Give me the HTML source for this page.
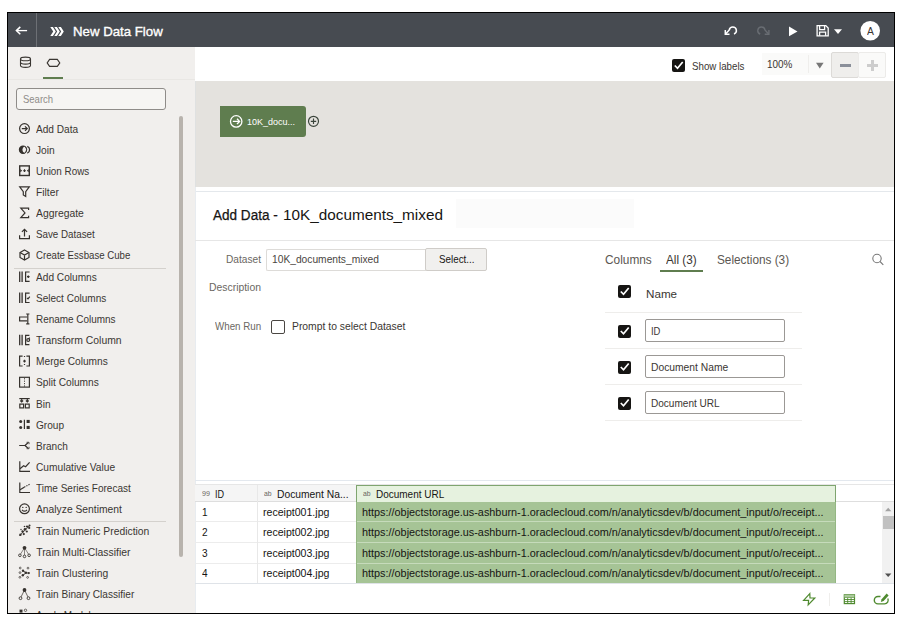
<!DOCTYPE html>
<html><head><meta charset="utf-8"><title>New Data Flow</title>
<style>
html,body{margin:0;padding:0;background:#fff;}
body{width:907px;height:619px;position:relative;overflow:hidden;font-family:"Liberation Sans",sans-serif;}
.a{position:absolute;box-sizing:border-box;}
.t{position:absolute;white-space:pre;line-height:1;transform-origin:0 0;}
svg{position:absolute;overflow:visible;}
.cb{position:absolute;box-sizing:border-box;width:13px;height:13px;background:#161513;border-radius:2px;}
.inp{position:absolute;box-sizing:border-box;border:1px solid #9b9895;border-radius:2px;background:#fff;}
</style></head><body>
<!-- frame -->
<div class="a" style="left:7px;top:12px;width:888px;height:602px;border:1px solid #000;background:#fff"></div>
<div class="a" id="clip" style="left:0;top:0;width:907px;height:619px;clip-path:inset(13px 13px 6px 8px)">
<!-- header -->
<div class="a" style="left:8px;top:13px;width:886px;height:34px;background:#474b51"></div>
<div class="a" style="left:36px;top:13px;width:1px;height:34px;background:#6d7075"></div>
<!-- sidebar -->
<div class="a" style="left:8px;top:47px;width:187px;height:566px;background:#f1efed"></div>
<div class="a" style="left:43px;top:77px;width:20px;height:2px;background:#5f7d4f"></div>
<div class="a" style="left:8px;top:79px;width:187px;height:1px;background:#e9e7e4"></div>
<div class="a" style="left:16px;top:88.3px;width:150px;height:22px;border:1px solid #8f8c89;border-radius:3px;background:#f6f5f3"></div>
<div class="a" style="left:179px;top:116px;width:4px;height:441px;background:#b8b3ad;border-radius:2px"></div>
<div class="a" style="left:14px;top:268px;width:152px;height:1px;background:#d4d1cd"></div>
<div class="a" style="left:14px;top:521px;width:152px;height:1px;background:#d4d1cd"></div>
<!-- main toolbar -->
<div class="cb" style="left:672px;top:59px"></div>
<div class="a" style="left:762px;top:53px;width:69px;height:22px;background:#fafaf9"></div>
<div class="a" style="left:808px;top:55px;width:1px;height:18px;background:#efeeec"></div>
<div class="a" style="left:831px;top:52px;width:28px;height:26px;background:#efeeec;border:1px solid #dcdad7;border-radius:2px"></div>
<div class="a" style="left:858px;top:52px;width:28px;height:26px;background:#fafaf9;border:1px solid #ecebe9;border-radius:2px"></div>
<div class="a" style="left:839.5px;top:63.5px;width:11.5px;height:3px;background:#8a8f99"></div>
<div class="a" style="left:867px;top:64px;width:11px;height:3px;background:#cdcdcd"></div>
<div class="a" style="left:871px;top:60px;width:3px;height:11px;background:#cdcdcd"></div>
<!-- canvas -->
<div class="a" style="left:195px;top:81px;width:699px;height:106.4px;background:#e4e2de"></div>
<div class="a" style="left:220px;top:106px;width:86px;height:31px;background:#5f7d4f;border-radius:0 3px 3px 0"></div>
<!-- panel -->
<div class="a" style="left:195px;top:191px;width:699px;height:1px;background:#e4e8ec"></div>
<div class="a" style="left:195px;top:81px;width:1px;height:106px;background:#dfe1e1"></div>
<div class="a" style="left:195px;top:187px;width:1px;height:426px;background:#e8ecf0"></div>
<div class="a" style="left:456px;top:199px;width:178px;height:29px;background:#fbfbfb"></div>
<div class="a" style="left:195px;top:240px;width:699px;height:1px;background:#e6e6e6"></div>
<div class="inp" style="left:266px;top:249px;width:160px;height:22px;border-color:#dddbd8;border-right:none;border-radius:2px 0 0 2px"></div>
<div class="a" style="left:425px;top:248px;width:62px;height:23px;background:#f1f0ee;border:1px solid #cfccc8;border-radius:2px"></div>
<div class="a" style="left:271px;top:320px;width:14px;height:14px;border:1.2px solid #4a4642;border-radius:2px;background:#fff"></div>
<!-- columns -->
<div class="a" style="left:660px;top:270px;width:43px;height:2px;background:#5f7d4f"></div>
<div class="cb" style="left:618px;top:285px"></div>
<div class="cb" style="left:618px;top:324.5px"></div>
<div class="cb" style="left:618px;top:360.5px"></div>
<div class="cb" style="left:618px;top:396.5px"></div>
<div class="a" style="left:605px;top:312px;width:197px;height:1px;background:#eeedeb"></div>
<div class="a" style="left:605px;top:348px;width:197px;height:1px;background:#eeedeb"></div>
<div class="a" style="left:605px;top:384px;width:197px;height:1px;background:#eeedeb"></div>
<div class="a" style="left:605px;top:420px;width:197px;height:1px;background:#eeedeb"></div>
<div class="inp" style="left:645px;top:319px;width:140px;height:23px"></div>
<div class="inp" style="left:645px;top:355px;width:140px;height:23px"></div>
<div class="inp" style="left:645px;top:391px;width:140px;height:23px"></div>
<!-- table -->
<div class="a" style="left:195px;top:480px;width:699px;height:1px;background:#e3e8ee"></div>
<div class="a" style="left:195px;top:484px;width:699px;height:18px;background:#fff;border-top:1px solid #e6e6e6;border-bottom:1px solid #dedede"></div>
<div class="a" style="left:195px;top:485px;width:161px;height:16px;background:#f5f5f5"></div>
<div class="a" style="left:356px;top:485px;width:480px;height:17px;background:#e6f2df;border:1px solid #7fa56f;border-bottom:none"></div>
<div class="a" style="left:356px;top:502px;width:480px;height:81px;background:#a6c496"></div>
<div class="a" style="left:195px;top:521px;width:161px;height:1px;background:#ececec"></div>
<div class="a" style="left:195px;top:542px;width:161px;height:1px;background:#ececec"></div>
<div class="a" style="left:195px;top:563px;width:161px;height:1px;background:#ececec"></div>
<div class="a" style="left:356px;top:521px;width:480px;height:1px;background:#c6dbbb"></div>
<div class="a" style="left:356px;top:542px;width:480px;height:1px;background:#c6dbbb"></div>
<div class="a" style="left:356px;top:563px;width:480px;height:1px;background:#c6dbbb"></div>
<div class="a" style="left:195px;top:583px;width:699px;height:1px;background:#dfe3e8"></div>
<div class="a" style="left:257px;top:485px;width:1px;height:98px;background:#e8e8e8"></div>
<div class="a" style="left:356px;top:502px;width:1px;height:81px;background:#94b783"></div>
<div class="a" style="left:835px;top:502px;width:1px;height:81px;background:#94b783"></div>
<div class="a" style="left:882px;top:502px;width:12px;height:81px;background:#f1f1f1"></div>
<div class="a" style="left:883px;top:516px;width:11px;height:13px;background:#c1c1c1"></div>
<div class="a" style="left:829px;top:593px;width:1px;height:13px;background:#efeeec"></div>
<svg width="907" height="619" viewBox="0 0 907 619" style="left:0;top:0" fill="none" stroke-linecap="butt" stroke-linejoin="miter">
<!-- header icons -->
<g stroke="#fff" stroke-width="1.3">
<path d="M16.2 30.6H27.1"/><path d="M20.3 26.9L16.4 30.6L20.3 34.3" stroke-width="1.5"/>
</g>
<g fill="#fff" stroke="none">
<path d="M50.3 27h2.6l2.9 4.5l-2.9 4.5h-2.6l2.9-4.5z"/>
<path d="M54.3 27h2.6l2.9 4.5l-2.9 4.5h-2.6l2.9-4.5z"/>
<path d="M58.3 27h2.6l2.9 4.500l-2.900 4.500h-2.600l2.900-4.500z"/>
</g>
<!-- undo -->
<g stroke="#fff" stroke-width="1.500">
<path d="M725.600 33.900L729.250 30A3.600 3.600 0 1 1 734 34"/>
<path d="M725.300 30V34.200H729.500"/>
</g>
<!-- redo (disabled) -->
<g stroke="#696d73" stroke-width="1.400">
<path d="M768.600 33.900L764.950 30A3.600 3.600 0 1 0 760.200 34"/>
<path d="M768.900 30V34.200H764.700"/>
</g>
<!-- play -->
<path d="M789 26.600L797.500 31.400L789 36.200z" fill="#fff"/>
<!-- save -->
<g stroke="#fff" stroke-width="1.3">
<path d="M817.100 25.600H825.800L828.200 28V35.800H817.100z"/>
<path d="M819.600 25.600V29.600H824.600V25.600"/>
<path d="M819.600 35.800V32.200H825.600V35.800"/>
</g>
<path d="M834 29.200H842L838 33.900z" fill="#fff"/>
<circle cx="870.200" cy="30.800" r="9.800" fill="#fff"/>
<!-- tab icons -->
<g stroke="#3a3632" stroke-width="1.100">
<ellipse cx="25.500" cy="58.900" rx="5" ry="1.800"/>
<path d="M20.500 58.900V65.600A5 1.800 0 0 0 30.500 65.600V58.900"/>
<path d="M20.500 62.300A5 1.800 0 0 0 30.500 62.300"/>
<path d="M47.200 62.900L49.600 59.400H57.300L59.800 62.900L57.300 66.400H49.600z"/>
</g>
<!-- toolbar: checkbox check, dropdown -->
<path d="M674.800 65.500L677.500 68.300L682.700 62" stroke="#fff" stroke-width="1.700"/>
<path d="M816 62.800H823.600L819.800 68.400z" fill="#777"/>
<!-- canvas node icons -->
<g stroke="#fff" stroke-width="1.300">
<circle cx="236.200" cy="121.400" r="5.700"/>
<path d="M232.800 121.400H239.400M237 118.800L239.600 121.400L237 124"/>
</g>
<g stroke="#3a443b" stroke-width="1.150">
<circle cx="313.500" cy="121.300" r="5"/>
<path d="M310.800 121.300H316.200M313.500 118.600V124"/>
</g>
<!-- columns: checkmarks, search -->
<g stroke="#fff" stroke-width="1.700">
<path d="M620.800 291.500L623.500 294.300L628.700 288"/>
<path d="M620.800 331L623.500 333.800L628.700 327.500"/>
<path d="M620.800 367L623.500 369.800L628.700 363.500"/>
<path d="M620.800 403L623.500 405.800L628.700 399.500"/>
</g>
<g stroke="#777" stroke-width="1.100">
<circle cx="877" cy="258.500" r="4.200"/><path d="M880 261.500L883.300 264.800"/>
</g>
<!-- scrollbar arrows -->
<path d="M885 511.200H891.400L888.200 507.800z" fill="#a3a3a3"/>
<path d="M885 573.400H891.400L888.200 577z" fill="#505050"/>
<!-- bottom icons -->
<g stroke="#4f8a2f" stroke-width="1.200" stroke-linejoin="miter">
<path d="M809.800 593.600L803.600 600.400H808.600L808.200 604.800L814.800 598H810z"/>
<rect x="844.300" y="594.800" width="10.200" height="8.800"/>
<path d="M844.300 597.400H854.500M844.300 599.500H854.500M844.300 601.600H854.500M847.700 597.400V603.600M851.100 597.400V603.600" stroke-width="0.900"/>
<path d="M880.500 596.500H878A3.700 3.700 0 0 0 878 603.900H884.500A3.700 3.700 0 0 0 887.800 598.500" stroke-width="1.400"/>
</g>
<rect x="844.300" y="594.800" width="10.200" height="2.600" fill="#a9c99a"/>
<path d="M880.800 602L881.600 599.200L886.600 593.600L888.600 595.400L883.600 601z" fill="#4f8a2f"/>
<g stroke="#36322e" stroke-width="1.2" fill="none">
<g transform="translate(19 123.1)"><circle cx="5.5" cy="5.5" r="4.9"/><path d="M2.8 5.500H8M6 3.300L8.200 5.500L6 7.700"/></g>
<g transform="translate(19 144.2)"><circle cx="4" cy="5.500" r="3.600" fill="#36322e"/><path d="M5.500 2.230A3.600 3.600 0 0 1 5.500 8.770A3.600 3.600 0 0 1 5.500 2.230z" fill="#f1efed" stroke="none"/><path d="M5.500 2.230A3.600 3.600 0 0 1 5.500 8.770" stroke-width="1"/><path d="M8.300 2.140A3.600 3.600 0 0 1 8.300 8.860" stroke-width="1.300"/></g>
<g transform="translate(19 165.2)"><rect x="0.700" y="0.700" width="9.600" height="9.600" stroke-width="1.400"/><path d="M1.200 3.900L3.200 5.500L1.200 7.100zM9.800 3.900L7.800 5.500L9.800 7.100z" fill="#36322e" stroke="none"/><path d="M4.100 5.500H6.900M5.500 4.100V6.900" stroke-width="1.100"/></g>
<g transform="translate(19 186.3)"><path d="M0.700 0.600H10.300L6.700 5.400V10.200L4.300 8.600V5.400z"/></g>
<g transform="translate(19 207.4)"><path d="M9.600 2.600V0.800H1.800L6 5.500L1.800 10.200H9.600V8.400"/></g>
<g transform="translate(19 228.4)"><path d="M0.600 6.800V10.300H10.400V6.800"/><path d="M5.500 8V1M2.900 3.500L5.500 0.900L8.100 3.500"/></g>
<g transform="translate(19 249.5)"><path d="M5.500 0.500L10 3V8L5.500 10.500L1 8V3z"/><path d="M1 3L5.500 5.500L10 3M5.500 5.500V10.500"/></g>
<g transform="translate(19 271.2)"><path d="M0.700 0.300V10.700M3.100 0.300V10.700" stroke-width="1.300"/><path d="M10.600 0.800H6.600V10.200H10.600"/><path d="M8 5.500H10.600M9.300 4.200V6.800"/></g>
<g transform="translate(19 292.3)"><path d="M0.700 0.300V10.700M3.100 0.300V10.700" stroke-width="1.300"/><path d="M10.600 0.800H6.600V10.200H10.600"/><path d="M8 5.600L9 6.600L10.800 4.400"/></g>
<g transform="translate(19 313.4)"><path d="M8 3.600H0.600V7.400H8"/><path d="M7.200 0.600H10.400M7.200 10.400H10.400M8.800 0.600V10.400"/></g>
<g transform="translate(19 334.5)"><path d="M0.700 0.300V10.700M3.100 0.300V10.700" stroke-width="1.300"/><path d="M10.400 0.800H6.600V10.200H10.400"/><circle cx="9.200" cy="5.600" r="1.400"/><path d="M9.600 4.400L10.800 3.200"/></g>
<g transform="translate(19 355.6)"><path d="M3.600 0.600H0.600V10.400H3.600M7.400 0.600H10.400V10.400H7.400"/><path d="M5.500 0.500V2.500M5.500 8.500V10.500" stroke-dasharray="1 1"/><path d="M4.200 5.500H6.800M5.500 4.200V6.800"/></g>
<g transform="translate(19 376.7)"><rect x="0.600" y="0.600" width="9.800" height="9.800"/><path d="M5.500 1.500V10" stroke-dasharray="1.200 1.200" stroke-width="0.9"/></g>
<g transform="translate(19 397.8)"><path d="M0.300 0.800H10.700"/><path d="M2.700 0.800V4M1.300 2.700L2.700 4.100L4.100 2.700M8.300 0.800V4M6.900 2.700L8.300 4.100L9.700 2.700"/><rect x="0.800" y="6.300" width="3.800" height="3.800"/><rect x="6.400" y="6.300" width="3.800" height="3.800"/></g>
<g transform="translate(19 418.9)"><circle cx="1.700" cy="2.500" r="1.500" fill="#36322e" stroke="none"/><circle cx="1.700" cy="8.500" r="1.500" fill="#36322e" stroke="none"/><path d="M5.400 0.800V10.200"/><rect x="7.600" y="1" width="3.100" height="3.100" fill="#36322e" stroke="none"/><rect x="7.600" y="7" width="3.100" height="3.100" fill="#36322e" stroke="none"/></g>
<g transform="translate(19 440.0)"><path d="M0.200 5.500H6L8.800 3M6 5.500L8.800 8"/><path d="M7.600 2.300H10V4.200M7.600 8.700H10V6.800" stroke-width="0.9"/></g>
<g transform="translate(19 461.1)"><path d="M0.800 0.200V10.300H11"/><path d="M1 7.600L4.600 4.600L6.600 5.600L10.600 1.200"/></g>
<g transform="translate(19 482.2)"><path d="M0.800 0.200V10.300H11"/><path d="M1 7.600L5.200 5"/><path d="M5.200 5L10.800 2" stroke-dasharray="1.300 1.100"/></g>
<g transform="translate(19 503.3)"><circle cx="5.500" cy="5.500" r="4.900"/><path d="M3 6.500Q5.500 9.300 8 6.500"/><circle cx="3.800" cy="4.100" r="0.700" fill="#36322e" stroke="none"/><circle cx="7.200" cy="4.100" r="0.700" fill="#36322e" stroke="none"/></g>
<g transform="translate(19 524.9)"><path d="M0.500 10.800L10.800 0.500" stroke-width="0.900"/><g fill="#36322e" stroke="none"><circle cx="1.400" cy="9.800" r="1.200"/><circle cx="3.600" cy="6.600" r="1.200"/><circle cx="4.800" cy="9.200" r="1.100"/><circle cx="6" cy="4.400" r="1.300"/><circle cx="7.800" cy="6.600" r="1.100"/><circle cx="8" cy="1.600" r="1.100"/><circle cx="10.200" cy="3" r="1.100"/><circle cx="10.500" cy="0.600" r="1"/><circle cx="5.500" cy="1.600" r="0.800"/><circle cx="2" cy="4.600" r="0.700"/></g></g>
<g transform="translate(19 546.0)"><path d="M5.500 1.800L1.200 8.600M5.500 1.800V9.600M5.500 1.800L9.800 8.600" stroke-width="0.800" stroke="#6f6a65"/><circle cx="5.500" cy="1.800" r="1.900" fill="#36322e" stroke="none"/><g fill="#f1efed" stroke-width="0.900"><circle cx="0.900" cy="9.300" r="1.300"/><circle cx="5.500" cy="10.400" r="1.300"/><circle cx="10.100" cy="9.300" r="1.300"/></g></g>
<g transform="translate(19 567.1)"><path d="M4 3.500L7 5.800L4 8.200M7 5.800L9.600 6" stroke-width="0.9"/><g fill="#36322e" stroke="none"><circle cx="4" cy="3.600" r="1.200"/><circle cx="6.800" cy="5.700" r="1.300"/><circle cx="3.800" cy="8.200" r="1.200"/><circle cx="9.800" cy="6" r="1.100"/></g><g stroke-width="0.700"><circle cx="1.200" cy="0.900" r="0.900"/><circle cx="9" cy="1" r="0.900"/><circle cx="1" cy="5.500" r="0.900"/><circle cx="0.900" cy="10.200" r="0.900"/><circle cx="8.600" cy="10.300" r="0.900"/></g></g>
<g transform="translate(19 588.2)"><path d="M5.500 1.800L1.800 9.200M5.500 1.800L9.200 9.200" stroke-width="0.900" stroke="#5f5a55"/><circle cx="5.500" cy="1.800" r="1.900" fill="#36322e" stroke="none"/><g fill="#f1efed" stroke-width="0.900"><circle cx="1.500" cy="10" r="1.400"/><circle cx="9.500" cy="10" r="1.400"/></g></g>
<g transform="translate(19 609.3)"><rect x="0.500" y="0.300" width="3" height="3" fill="#36322e" stroke="none"/><circle cx="6.500" cy="1" r="1.200" stroke-width="0.700"/></g>
</g></svg>

<span class="t" style="left:73.40px;top:25.00px;font-size:13.3px;color:#ffffff;transform:scaleX(0.9949);-webkit-text-stroke:0.35px #fff;">New Data Flow</span>
<span class="t" style="left:866.80px;top:26.00px;font-size:10.5px;color:#3a3632;transform:scaleX(0.9835);">A</span>
<span class="t" style="left:22.90px;top:95.00px;font-size:10.4px;color:#8f8c89;transform:scaleX(0.9139);">Search</span>
<span class="t" style="left:36.20px;top:125.00px;font-size:10.4px;color:#3a3632;transform:scaleX(0.9717);">Add Data</span>
<span class="t" style="left:36.20px;top:146.00px;font-size:10.4px;color:#3a3632;transform:scaleX(0.9862);">Join</span>
<span class="t" style="left:36.20px;top:167.00px;font-size:10.4px;color:#3a3632;transform:scaleX(0.9513);">Union Rows</span>
<span class="t" style="left:36.20px;top:188.00px;font-size:10.4px;color:#3a3632;transform:scaleX(0.9873);">Filter</span>
<span class="t" style="left:36.20px;top:209.00px;font-size:10.4px;color:#3a3632;transform:scaleX(0.9968);">Aggregate</span>
<span class="t" style="left:36.20px;top:230.00px;font-size:10.4px;color:#3a3632;transform:scaleX(0.9424);">Save Dataset</span>
<span class="t" style="left:36.20px;top:251.00px;font-size:10.4px;color:#3a3632;transform:scaleX(0.9276);">Create Essbase Cube</span>
<span class="t" style="left:36.20px;top:273.00px;font-size:10.4px;color:#3a3632;transform:scaleX(0.9747);">Add Columns</span>
<span class="t" style="left:36.20px;top:294.00px;font-size:10.4px;color:#3a3632;transform:scaleX(0.9661);">Select Columns</span>
<span class="t" style="left:36.20px;top:315.00px;font-size:10.4px;color:#3a3632;transform:scaleX(0.9571);">Rename Columns</span>
<span class="t" style="left:36.20px;top:336.00px;font-size:10.4px;color:#3a3632;transform:scaleX(0.9993);">Transform Column</span>
<span class="t" style="left:36.20px;top:357.00px;font-size:10.4px;color:#3a3632;transform:scaleX(0.9790);">Merge Columns</span>
<span class="t" style="left:36.20px;top:378.00px;font-size:10.4px;color:#3a3632;transform:scaleX(0.9796);">Split Columns</span>
<span class="t" style="left:36.20px;top:400.00px;font-size:10.4px;color:#3a3632;transform:scaleX(0.9713);">Bin</span>
<span class="t" style="left:36.20px;top:421.00px;font-size:10.4px;color:#3a3632;transform:scaleX(0.9726);">Group</span>
<span class="t" style="left:36.20px;top:442.00px;font-size:10.4px;color:#3a3632;transform:scaleX(0.9655);">Branch</span>
<span class="t" style="left:36.20px;top:463.00px;font-size:10.4px;color:#3a3632;transform:scaleX(0.9805);">Cumulative Value</span>
<span class="t" style="left:36.20px;top:484.00px;font-size:10.4px;color:#3a3632;transform:scaleX(0.9638);">Time Series Forecast</span>
<span class="t" style="left:36.20px;top:505.00px;font-size:10.4px;color:#3a3632;transform:scaleX(0.9903);">Analyze Sentiment</span>
<span class="t" style="left:36.20px;top:527.00px;font-size:10.4px;color:#3a3632;transform:scaleX(0.9943);">Train Numeric Prediction</span>
<span class="t" style="left:36.20px;top:548.00px;font-size:10.4px;color:#3a3632;transform:scaleX(1.0000);">Train Multi-Classifier</span>
<span class="t" style="left:36.20px;top:569.00px;font-size:10.4px;color:#3a3632;transform:scaleX(0.9910);">Train Clustering</span>
<span class="t" style="left:36.20px;top:590.00px;font-size:10.4px;color:#3a3632;transform:scaleX(0.9709);">Train Binary Classifier</span>
<span class="t" style="left:36.20px;top:611.00px;font-size:10.4px;color:#3a3632;transform:scaleX(0.9583);">Apply Model</span>
<span class="t" style="left:692.40px;top:62.00px;font-size:10.4px;color:#3a3632;transform:scaleX(0.9352);">Show labels</span>
<span class="t" style="left:766.60px;top:60.00px;font-size:10.4px;color:#3a3632;transform:scaleX(0.9557);">100%</span>
<span class="t" style="left:247.00px;top:117.00px;font-size:9.8px;color:#ffffff;transform:scaleX(0.9178);">10K_docu...</span>
<span class="t" style="left:213.00px;top:209.00px;font-size:13.8px;color:#161513;transform:scaleX(0.9814);-webkit-text-stroke:0.25px #161513;">Add Data - </span>
<span class="t" style="left:283.20px;top:208.00px;font-size:14.8px;color:#161513;transform:scaleX(1.0340);">10K_documents_mixed</span>
<span class="t" style="left:225.70px;top:255.00px;font-size:10.4px;color:#6b6762;transform:scaleX(0.9773);">Dataset</span>
<span class="t" style="left:271.50px;top:255.00px;font-size:10.0px;color:#4a4642;transform:scaleX(1.0238);">10K_documents_mixed</span>
<span class="t" style="left:438.50px;top:255.00px;font-size:10.4px;color:#161513;transform:scaleX(0.9455);">Select...</span>
<span class="t" style="left:208.70px;top:283.00px;font-size:10.4px;color:#6b6762;transform:scaleX(1.0003);">Description</span>
<span class="t" style="left:214.60px;top:322.00px;font-size:10.4px;color:#6b6762;transform:scaleX(0.9390);">When Run</span>
<span class="t" style="left:291.60px;top:322.00px;font-size:10.4px;color:#3a3632;transform:scaleX(0.9966);">Prompt to select Dataset</span>
<span class="t" style="left:604.70px;top:254.00px;font-size:12.3px;color:#5b5752;transform:scaleX(0.9643);">Columns</span>
<span class="t" style="left:665.90px;top:254.00px;font-size:12.3px;color:#3a3632;transform:scaleX(0.9556);">All (3)</span>
<span class="t" style="left:716.50px;top:254.00px;font-size:12.3px;color:#5b5752;transform:scaleX(0.9589);">Selections (3)</span>
<span class="t" style="left:645.70px;top:289.00px;font-size:11.8px;color:#3a3632;transform:scaleX(0.9883);">Name</span>
<span class="t" style="left:651.20px;top:327.00px;font-size:10.0px;color:#3a3632;transform:scaleX(0.9400);">ID</span>
<span class="t" style="left:651.20px;top:363.00px;font-size:10.0px;color:#3a3632;transform:scaleX(1.0289);">Document Name</span>
<span class="t" style="left:651.20px;top:399.00px;font-size:10.0px;color:#3a3632;transform:scaleX(1.0050);">Document URL</span>
<span class="t" style="left:202.00px;top:490.00px;font-size:7px;color:#6b6762;transform:scaleX(1.0261);">99</span>
<span class="t" style="left:214.60px;top:489.00px;font-size:10.8px;color:#161513;transform:scaleX(0.8416);">ID</span>
<span class="t" style="left:263.80px;top:490.00px;font-size:7.5px;color:#6b6762;transform:scaleX(0.9109);">ab</span>
<span class="t" style="left:276.50px;top:489.00px;font-size:10.8px;color:#161513;transform:scaleX(0.9531);">Document Na...</span>
<span class="t" style="left:363.00px;top:490.00px;font-size:7.5px;color:#6b6762;transform:scaleX(0.9109);">ab</span>
<span class="t" style="left:375.80px;top:489.00px;font-size:10.8px;color:#161513;transform:scaleX(0.9240);">Document URL</span>
<span class="t" style="left:202.00px;top:507.00px;font-size:10.6px;color:#161513;transform:scaleX(0.9500);">1</span>
<span class="t" style="left:262.60px;top:507.00px;font-size:10.6px;color:#161513;transform:scaleX(0.9976);">receipt001.jpg</span>
<span class="t" style="left:362.20px;top:507.00px;font-size:10.6px;color:#161513;transform:scaleX(1.0246);">https://objectstorage.us-ashburn-1.oraclecloud.com/n/analyticsdev/b/document_input/o/receipt...</span>
<span class="t" style="left:202.00px;top:527.00px;font-size:10.6px;color:#161513;transform:scaleX(0.9500);">2</span>
<span class="t" style="left:262.60px;top:527.00px;font-size:10.6px;color:#161513;transform:scaleX(0.9976);">receipt002.jpg</span>
<span class="t" style="left:362.20px;top:527.00px;font-size:10.6px;color:#161513;transform:scaleX(1.0246);">https://objectstorage.us-ashburn-1.oraclecloud.com/n/analyticsdev/b/document_input/o/receipt...</span>
<span class="t" style="left:202.00px;top:548.00px;font-size:10.6px;color:#161513;transform:scaleX(0.9500);">3</span>
<span class="t" style="left:262.60px;top:548.00px;font-size:10.6px;color:#161513;transform:scaleX(0.9976);">receipt003.jpg</span>
<span class="t" style="left:362.20px;top:548.00px;font-size:10.6px;color:#161513;transform:scaleX(1.0246);">https://objectstorage.us-ashburn-1.oraclecloud.com/n/analyticsdev/b/document_input/o/receipt...</span>
<span class="t" style="left:202.00px;top:568.00px;font-size:10.6px;color:#161513;transform:scaleX(0.9500);">4</span>
<span class="t" style="left:262.60px;top:568.00px;font-size:10.6px;color:#161513;transform:scaleX(0.9976);">receipt004.jpg</span>
<span class="t" style="left:362.20px;top:568.00px;font-size:10.6px;color:#161513;transform:scaleX(1.0246);">https://objectstorage.us-ashburn-1.oraclecloud.com/n/analyticsdev/b/document_input/o/receipt...</span>
</div>
</body></html>
